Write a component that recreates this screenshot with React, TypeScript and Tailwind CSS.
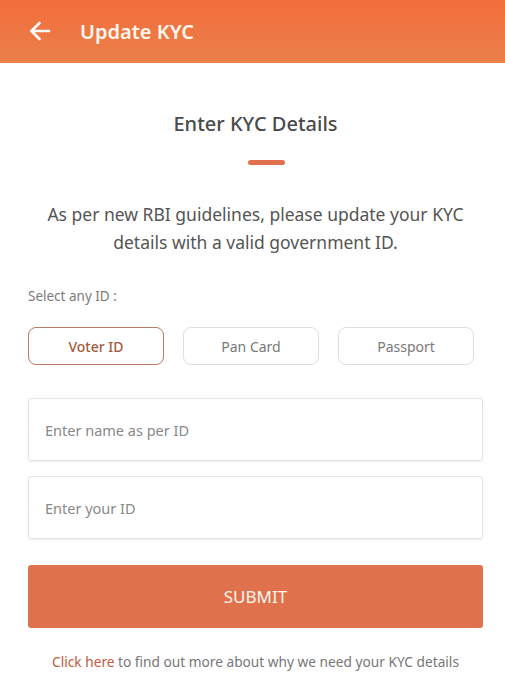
import React, { useState } from "react";

const ids = ["Voter ID", "Pan Card", "Passport"];

const App = () => {
  const [selected, setSelected] = useState("Voter ID");

  return (
    <div className="min-h-screen bg-white font-['Noto_Sans',sans-serif]">
      {/* header */}
      <header className="flex h-[63px] items-center bg-gradient-to-b from-[#f36c3c] to-[#e98049] px-7">
        <svg width="24" height="24" viewBox="0 0 24 24" fill="none" stroke="#fff" strokeWidth="2.6" strokeLinecap="round" strokeLinejoin="round" className="mb-[1px]">
          <path d="M21 12H3.5" />
          <path d="M11.5 4L3.5 12l8 8" />
        </svg>
        <h1 className="ml-7 text-[20px] font-semibold text-[#fff6ee]">Update KYC</h1>
      </header>

      <div className="pl-7 pr-[22px]">
        <h2 className="mt-[46px] text-center text-[20px] font-medium leading-[30px] text-[#4a4a4a]">
          Enter KYC Details
        </h2>
        <div className="ml-[220px] mt-[21px] h-[5px] w-[37px] rounded-sm bg-[#e0704e]" />

        <p className="mt-[35px] text-center text-[17.5px] leading-[28px] text-[#555]">
          As per new RBI guidelines, please update your KYC details with a valid government ID.
        </p>

        <p className="mt-[30px] text-[13.5px] leading-[20px] text-[#7a7a7a]">Select any ID :</p>

        {/* id options */}
        <div className="mt-[21px] flex gap-[19px] pr-[9px]">
          {ids.map((id) => (
            <button
              key={id}
              onClick={() => setSelected(id)}
              className={
                selected === id
                  ? "h-[38px] flex-1 rounded-lg border border-[#b97a63] text-[14px] font-medium text-[#a35a40]"
                  : "h-[38px] flex-1 rounded-lg border border-[#dedede] text-[14px] text-[#787878]"
              }
            >
              {id}
            </button>
          ))}
        </div>

        {/* inputs */}
        <input
          type="text"
          placeholder="Enter name as per ID"
          className="mt-[33px] block h-[63px] w-full rounded-[3px] border border-[#e3e3e3] px-4 text-[14.5px] shadow-[0_1px_2px_rgba(0,0,0,0.08)] outline-none placeholder:text-[#888]"
        />
        <input
          type="text"
          placeholder="Enter your ID"
          className="mt-[15px] block h-[63px] w-full rounded-[3px] border border-[#e3e3e3] px-4 text-[14.5px] shadow-[0_1px_2px_rgba(0,0,0,0.08)] outline-none placeholder:text-[#888]"
        />

        <button className="mt-[26px] h-[63px] w-full rounded-[3px] bg-[#e0714d] text-[17px] text-[#fff6ee]">
          SUBMIT
        </button>

        <p className="mt-[24px] text-center text-[13.7px] leading-[20px] text-[#777]">
          <span className="text-[#c45a3c]">Click here</span> to find out more about why we need your KYC details
        </p>
      </div>
    </div>
  );
};

export default App;
